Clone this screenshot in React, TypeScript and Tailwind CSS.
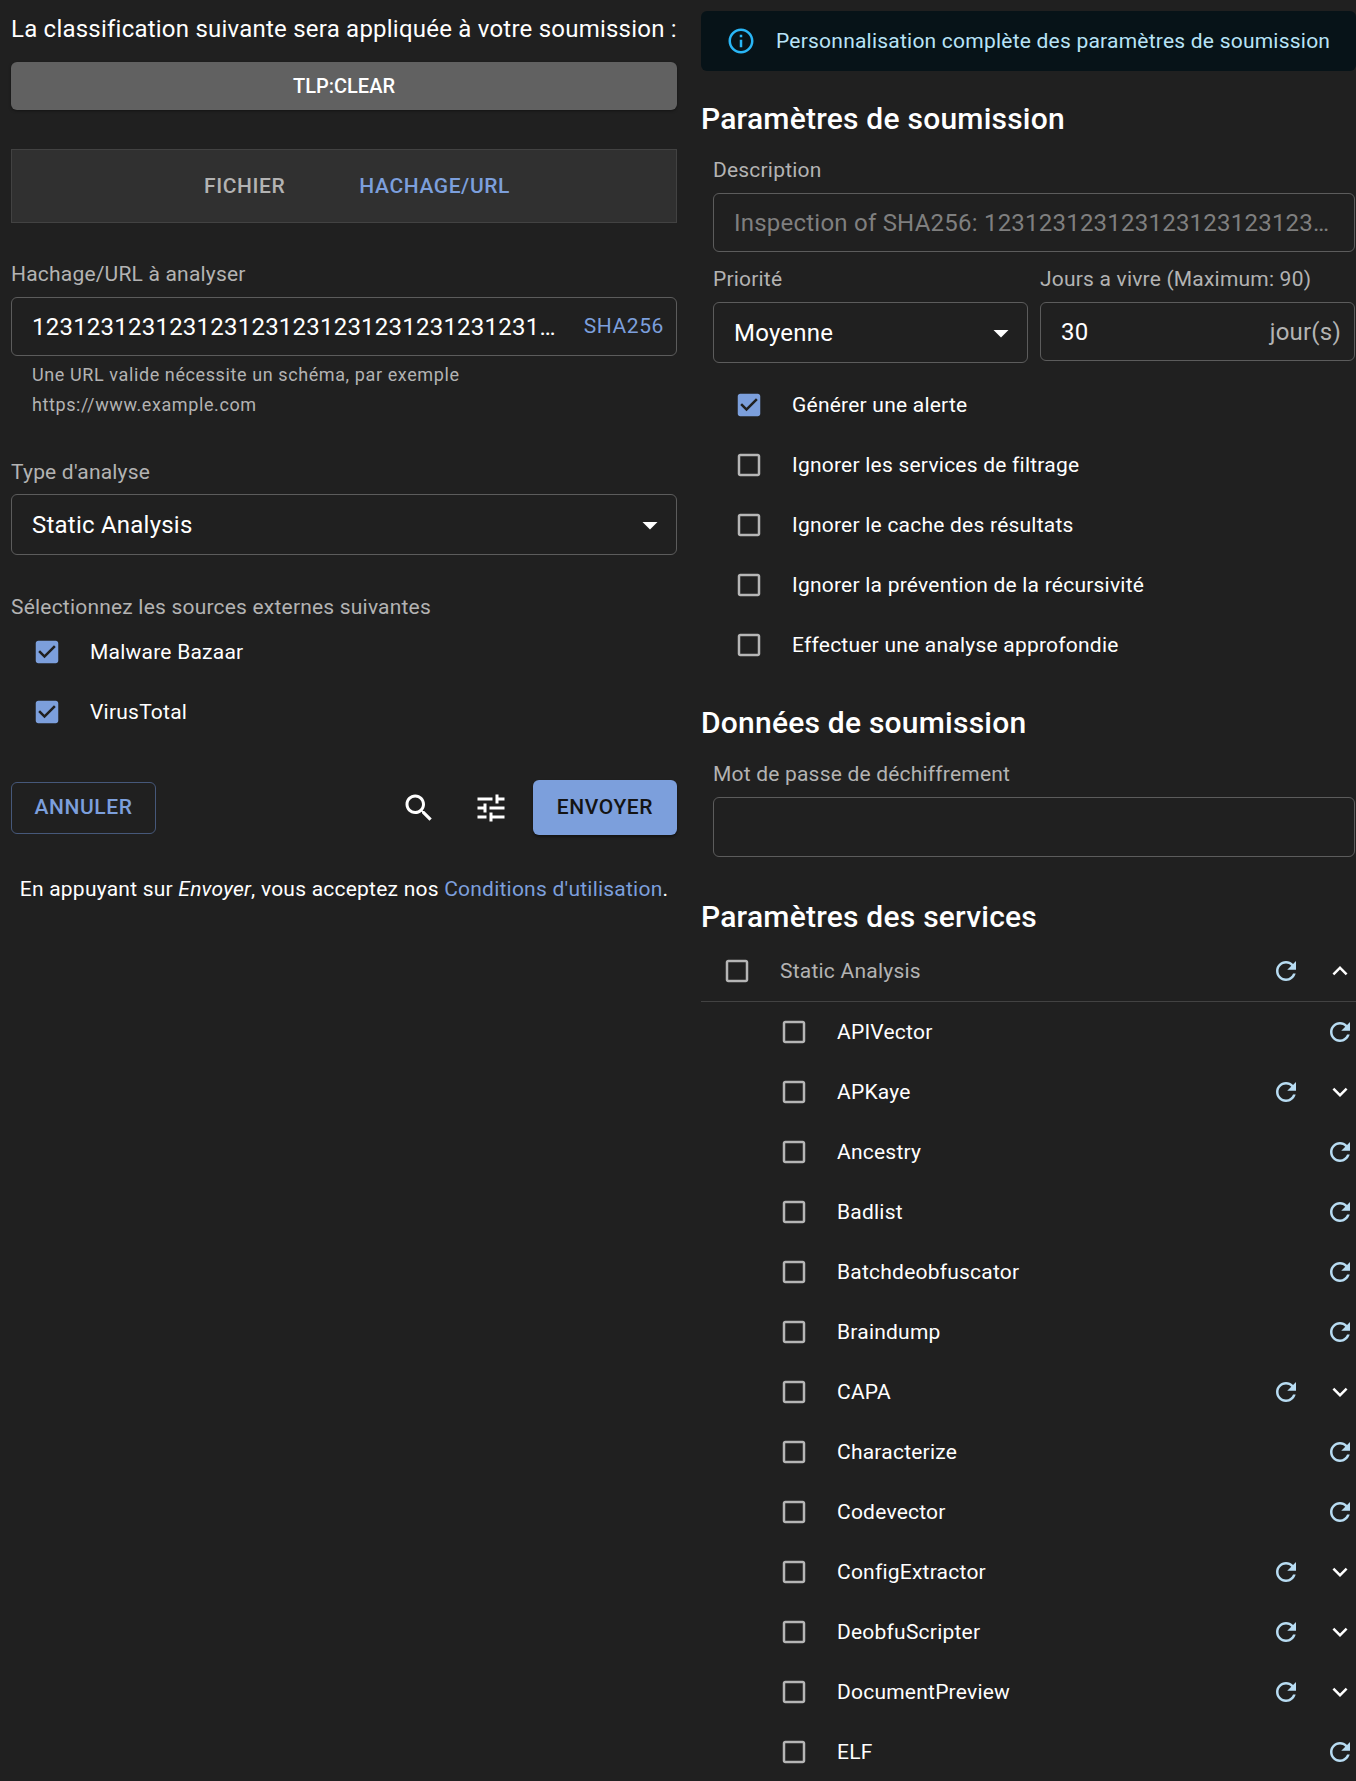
import React from "react";

const paths = {
    search: "M15.5 14h-.79l-.28-.27C15.41 12.59 16 11.11 16 9.5 16 5.91 13.09 3 9.5 3S3 5.91 3 9.5 5.91 16 9.5 16c1.61 0 3.09-.59 4.23-1.57l.27.28v.79l5 4.99L20.49 19l-4.99-5zm-6 0C7.01 14 5 11.99 5 9.5S7.01 5 9.5 5 14 7.01 14 9.5 11.99 14 9.5 14z",
    tune: "M3 17v2h6v-2H3zM3 5v2h10V5H3zm10 16v-2h8v-2h-8v-2h-2v6h2zM7 9v2H3v2h4v2h2V9H7zm14 4v-2H11v2h10zm-6-4h2V7h4V5h-4V3h-2v6z",
    refresh: "M17.65 6.35C16.2 4.9 14.21 4 12 4c-4.42 0-7.99 3.58-7.99 8s3.57 8 7.99 8c3.73 0 6.84-2.55 7.73-6h-2.08c-.82 2.33-3.04 4-5.65 4-3.31 0-6-2.69-6-6s2.69-6 6-6c1.66 0 3.14.69 4.22 1.78L13 11h7V4l-2.35 2.35z",
    less: "M12 8l-6 6 1.41 1.41L12 10.83l4.59 4.58L18 14z",
    more: "M16.59 8.59L12 13.17 7.41 8.59 6 10l6 6 6-6z",
    info: "M11 7h2v2h-2zm0 4h2v6h-2zm1-9C6.48 2 2 6.48 2 12s4.48 10 10 10 10-4.48 10-10S17.52 2 12 2zm0 18c-4.41 0-8-3.59-8-8s3.59-8 8-8 8 3.59 8 8-3.59 8-8 8z",
    checked: "M19 3H5c-1.11 0-2 .9-2 2v14c0 1.1.89 2 2 2h14c1.1 0 2-.9 2-2V5c0-1.1-.9-2-2-2zm-9 14l-5-5 1.41-1.41L10 14.17l7.59-7.59L19 8l-9 9z",
    blank: "M19 5v14H5V5h14m0-2H5c-1.1 0-2 .9-2 2v14c0 1.1.9 2 2 2h14c1.1 0 2-.9 2-2V5c0-1.1-.9-2-2-2z",
    caret: "M7 10l5 5 5-5z",
};

const Icon = ({ d, className }: { d: string; className?: string }) => (
    <svg viewBox="0 0 24 24" fill="currentColor" className={"shrink-0 " + (className ?? "w-[36px] h-[36px]")}>
        <path d={d} />
    </svg>
);

const Box = ({ on }: { on?: boolean }) =>
    on ? (
        <Icon d={paths.checked} className="w-[30px] h-[30px] text-[#7c9fdc]" />
    ) : (
        <Icon d={paths.blank} className="w-[30px] h-[30px] text-[#b5b5b5]" />
    );

const Label = ({ children, className = "" }: { children: React.ReactNode; className?: string }) => (
    <div className={"h-[28px] leading-[28px] text-[21px] tracking-[0.2px] text-[#b3b3b3] whitespace-nowrap " + className}>{children}</div>
);

const CheckRow = ({ label, on }: { label: string; on?: boolean }) => (
    <div className="h-[60px] flex items-center text-[21px] tracking-[0.225px] text-white">
        <Box on={on} />
        <span className="ml-[28px] pt-[2px]">{label}</span>
    </div>
);

const services: { name: string; more?: boolean }[] = [
    { name: "APIVector" },
    { name: "APKaye", more: true },
    { name: "Ancestry" },
    { name: "Badlist" },
    { name: "Batchdeobfuscator" },
    { name: "Braindump" },
    { name: "CAPA", more: true },
    { name: "Characterize" },
    { name: "Codevector" },
    { name: "ConfigExtractor", more: true },
    { name: "DeobfuScripter", more: true },
    { name: "DocumentPreview", more: true },
    { name: "ELF" },
];

const outlined = "border border-[#5c5c5c] rounded-[6px] flex items-center";
const value = "text-[24px] tracking-[0.225px]";

export default function App() {
    return (
        <div className="w-[1356px] h-[1781px] overflow-hidden bg-[#202020] flex font-['Roboto',sans-serif] text-white">
            {/* submission form */}
            <div className="w-[666px] ml-[11px] shrink-0">
                <div className="mt-[14px] h-[30px] leading-[30px] text-[24px] tracking-[0.225px] whitespace-nowrap">
                    La classification suivante sera appliquée à votre soumission :
                </div>
                <div className="mt-[18px] h-[48px] rounded-[6px] bg-[#616161] flex items-center justify-center text-[20px] font-medium shadow-[0_1px_3px_rgba(0,0,0,0.4)]">
                    TLP:CLEAR
                </div>
                <div className="mt-[39px] h-[74px] pt-[2px] pl-[26px] bg-[#303030] border border-[#424242] flex items-center justify-center gap-[74px] text-[21px] tracking-[0.6px] font-medium">
                    <span className="text-[#b3b3b3]">FICHIER</span>
                    <span className="text-[#7c9fdc]">HACHAGE/URL</span>
                </div>

                <Label className="mt-[37px]">Hachage/URL à analyser</Label>
                <div className={outlined + " mt-[9px] h-[59px] pl-[20px] pr-[12px] justify-between " + value}>
                    <span>1231231231231231231231231231231231231…</span>
                    <span className="text-[#7c9fdc] tracking-[0.6px] text-[21px]">SHA256</span>
                </div>
                <div className="mt-[4px] pl-[21px] text-[18px] tracking-[0.6px] leading-[30px] text-[#b3b3b3]">
                    Une URL valide nécessite un schéma, par exemple
                    <br />
                    https://www.example.com
                </div>

                <Label className="mt-[38px]">Type d'analyse</Label>
                <div className={outlined + " mt-[8px] h-[61px] pl-[20px] pr-[8px] justify-between " + value}>
                    <span>Static Analysis</span>
                    <Icon d={paths.caret} />
                </div>

                <Label className="mt-[38px]">Sélectionnez les sources externes suivantes</Label>
                <div className="mt-[1px] pl-[21px]">
                    <CheckRow label="Malware Bazaar" on />
                    <CheckRow label="VirusTotal" on />
                </div>

                <div className="mt-[38px] h-[55px] flex items-center">
                    <div className="h-[52px] w-[145px] border border-[#46587a] rounded-[6px] flex items-center justify-center text-[#7c9fdc] text-[21px] font-medium tracking-[0.6px]">
                        ANNULER
                    </div>
                    <div className="ml-auto flex items-center gap-[36px] mr-[24px]">
                        <Icon d={paths.search} />
                        <Icon d={paths.tune} />
                    </div>
                    <div className="h-[55px] w-[144px] rounded-[6px] bg-[#7c9fdc] flex items-center justify-center text-[#141414] text-[21px] font-medium tracking-[0.6px] shadow-[0_2px_3px_rgba(0,0,0,0.4)]">
                        ENVOYER
                    </div>
                </div>

                <div className="mt-[40px] h-[28px] leading-[28px] text-[21px] tracking-[0.225px] text-center whitespace-nowrap">
                    En appuyant sur <em>Envoyer</em>, vous acceptez nos <span className="text-[#7c9fdc]">Conditions d'utilisation</span>.
                </div>
            </div>

            {/* parameters */}
            <div className="w-[655px] ml-[24px] shrink-0">
                <div className="mt-[11px] h-[60px] rounded-[6px] bg-[#071318] flex items-center pl-[25px] text-[#b8e3f7] text-[21px] tracking-[0.225px]">
                    <Icon d={paths.info} className="w-[30px] h-[30px] text-[#29b6f6]" />
                    <span className="ml-[20px] pt-[1px] whitespace-nowrap">Personnalisation complète des paramètres de soumission</span>
                </div>

                <h2 className="mt-[28px] h-[40px] leading-[40px] text-[30px] tracking-[0.225px] font-medium">Paramètres de soumission</h2>
                <div className="pl-[12px] pr-[1px]">
                    <Label className="mt-[17px]">Description</Label>
                    <div className={outlined + " mt-[9px] h-[59px] px-[20px] text-[#7f7f7f] whitespace-nowrap " + value}>
                        <span>Inspection of SHA256: 123123123123123123123123…</span>
                    </div>
                    <div className="mt-[13px] grid grid-cols-[315px_1fr] gap-x-[12px]">
                        <Label>Priorité</Label>
                        <Label>Jours a vivre (Maximum: 90)</Label>
                        <div className={outlined + " mt-[9px] h-[61px] pl-[20px] pr-[8px] justify-between " + value}>
                            <span className="pt-[1px]">Moyenne</span>
                            <Icon d={paths.caret} />
                        </div>
                        <div className={outlined + " mt-[9px] h-[59px] pl-[20px] pr-[13px] justify-between " + value}>
                            <span>30</span>
                            <span className="text-[#b3b3b3]">jour(s)</span>
                        </div>
                    </div>
                    <div className="mt-[12px] pl-[21px]">
                        <CheckRow label="Générer une alerte" on />
                        <CheckRow label="Ignorer les services de filtrage" />
                        <CheckRow label="Ignorer le cache des résultats" />
                        <CheckRow label="Ignorer la prévention de la récursivité" />
                        <CheckRow label="Effectuer une analyse approfondie" />
                    </div>
                </div>

                <h2 className="mt-[28px] h-[40px] leading-[40px] text-[30px] tracking-[0.225px] font-medium">Données de soumission</h2>
                <div className="pl-[12px] pr-[1px]">
                    <Label className="mt-[17px]">Mot de passe de déchiffrement</Label>
                    <div className={outlined + " mt-[9px] h-[60px]"} />
                </div>

                <h2 className="mt-[40px] h-[40px] leading-[40px] text-[30px] tracking-[0.225px] font-medium">Paramètres des services</h2>
                <div className="mt-[4px] h-[61px] border-b border-[#424242] flex items-center pl-[21px] pr-[1px] text-[21px] tracking-[0.225px] text-[#b3b3b3]">
                    <Box />
                    <span className="ml-[28px] pt-[2px] flex-1">Static Analysis</span>
                    <Icon d={paths.refresh} className="w-[30px] h-[30px] text-[#b8dcf2]" />
                    <Icon d={paths.less} className="w-[30px] h-[30px] ml-[24px] text-white" />
                </div>
                {services.map((s) => (
                    <div key={s.name} className="h-[60px] flex items-center pl-[78px] pr-[1px] text-[21px] tracking-[0.225px]">
                        <Box />
                        <span className="ml-[28px] pt-[2px] flex-1">{s.name}</span>
                        <Icon d={paths.refresh} className="w-[30px] h-[30px] text-[#b8dcf2]" />
                        {s.more && <Icon d={paths.more} className="w-[30px] h-[30px] ml-[24px] text-white" />}
                    </div>
                ))}
            </div>
        </div>
    );
}
